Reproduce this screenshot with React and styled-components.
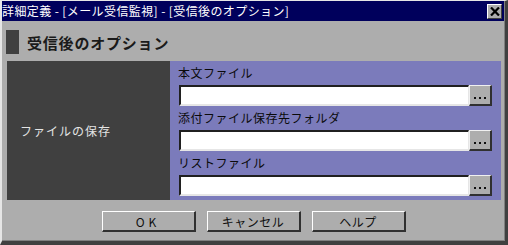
import styled, { createGlobalStyle } from 'styled-components'

const GlobalStyle = createGlobalStyle`
  html, body {
    margin: 0;
    padding: 0;
    background: #adadad;
  }
  body {
    font-family: "Noto Sans CJK JP", "Noto Sans", sans-serif;
    font-size: 12px;
  }
`

const Window = styled.div`
  width: 508px;
  height: 245px;
  box-sizing: border-box;
  background: #adadad;
  border-top: 1px solid #e6e6e6;
  border-left: 2px solid #e6e6e6;
  border-right: 3px solid #404040;
  border-bottom: 4px solid #404040;
  box-shadow: inset -1px -1px 0 #808080;
  display: flex;
  flex-direction: column;
`

const TitleBar = styled.div`
  height: 20px;
  background: #00005c;
  color: #ffffff;
  display: flex;
  align-items: center;
  justify-content: space-between;
  padding: 0 2px 0 0;
  margin-right: 1px;
`

const TitleText = styled.span`
  font-size: 12px;
  line-height: 20px;
  letter-spacing: 0.4px;
  white-space: nowrap;
`

const CloseButton = styled.div`
  width: 15px;
  height: 15px;
  box-sizing: border-box;
  background: #adadad;
  border-top: 1px solid #ffffff;
  border-left: 1px solid #ffffff;
  border-right: 1px solid #404040;
  border-bottom: 1px solid #404040;
  display: flex;
  align-items: center;
  justify-content: center;
`

const Header = styled.div`
  display: flex;
  align-items: center;
  gap: 8px;
  margin: 9px 0 0 4px;
  height: 24px;
`

const HeaderMark = styled.div`
  width: 13px;
  height: 24px;
  background: #404040;
`

const HeaderText = styled.h1`
  margin: 0;
  font-size: 15px;
  font-weight: bold;
  letter-spacing: 0.8px;
  color: #1a1a1a;
`

const Panel = styled.div`
  margin: 7px 4px 0 5px;
  display: grid;
  grid-template-columns: 163px 1fr;
  height: 139px;
`

const SideCell = styled.div`
  background: #404040;
  color: #e4e4e4;
  display: flex;
  align-items: center;
  padding-left: 13px;
  letter-spacing: 1px;
  font-size: 12px;
`

const FieldCell = styled.div`
  background: #7b7bbb;
  padding: 0 9px 4px 9px;
  display: flex;
  flex-direction: column;
`

const Label = styled.div`
  height: 24px;
  line-height: 24px;
  font-size: 12px;
  letter-spacing: 0.5px;
  color: #0a0a0a;
  margin-left: -1px;
`

const FieldRow = styled.div`
  display: flex;
  height: 21px;
`

const TextBox = styled.div`
  width: 290px;
  height: 21px;
  box-sizing: border-box;
  background: #ffffff;
  border-top: 2px solid #202020;
  border-left: 2px solid #202020;
  border-bottom: 2px solid #e6e6e6;
  border-right: 1px solid #e6e6e6;
`

const BrowseButton = styled.div`
  width: 23px;
  height: 21px;
  box-sizing: border-box;
  background: #adadad;
  border-top: 1px solid #f0f0f0;
  border-left: 1px solid #f0f0f0;
  border-right: 2px solid #303030;
  border-bottom: 2px solid #303030;
  display: flex;
  align-items: flex-end;
  justify-content: center;
  gap: 3px;
  padding-bottom: 5px;
`

const Dot = styled.span`
  width: 2px;
  height: 2px;
  background: #101010;
`

const ButtonBar = styled.div`
  display: flex;
  justify-content: center;
  gap: 11px;
  margin-top: 11px;
`

const Button = styled.div`
  width: 94px;
  height: 21px;
  box-sizing: border-box;
  background: #adadad;
  border-top: 1px solid #ffffff;
  border-left: 1px solid #ffffff;
  border-right: 2px solid #303030;
  border-bottom: 2px solid #303030;
  display: flex;
  align-items: center;
  justify-content: center;
  font-size: 12px;
  letter-spacing: ${props => props.$spread ? '4px' : '0.5px'};
  color: #101010;
`

const fields = ['本文ファイル', '添付ファイル保存先フォルダ', 'リストファイル']

function App() {
  return (
    <>
      <GlobalStyle />
      <Window>
        <TitleBar>
          <TitleText>詳細定義 - [メール受信監視] - [受信後のオプション]</TitleText>
          <CloseButton>
            <svg width="10" height="9" viewBox="0 0 10 9">
              <path d="M1 0.5 L9 8.5 M9 0.5 L1 8.5" stroke="#000" strokeWidth="2.2" />
            </svg>
          </CloseButton>
        </TitleBar>
        <Header>
          <HeaderMark />
          <HeaderText>受信後のオプション</HeaderText>
        </Header>
        <Panel>
          <SideCell>ファイルの保存</SideCell>
          <FieldCell>
            {fields.map(name => (
              <div key={name}>
                <Label>{name}</Label>
                <FieldRow>
                  <TextBox />
                  <BrowseButton>
                    <Dot /><Dot /><Dot />
                  </BrowseButton>
                </FieldRow>
              </div>
            ))}
          </FieldCell>
        </Panel>
        <ButtonBar>
          <Button $spread>OK</Button>
          <Button>キャンセル</Button>
          <Button>ヘルプ</Button>
        </ButtonBar>
      </Window>
    </>
  )
}

export default App
